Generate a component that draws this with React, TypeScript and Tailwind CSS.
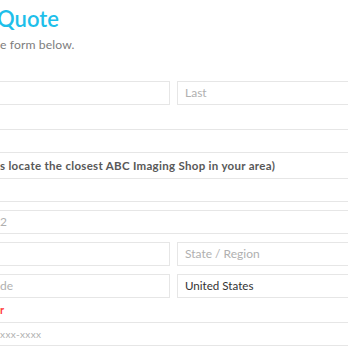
import React from "react";

const font = { fontFamily: "Lato, 'Open Sans', sans-serif" };

function Box({ children, className = "" }: { children?: React.ReactNode; className?: string }) {
  return (
    <div className={"h-[24px] border-[#e6e6e6] bg-white flex items-center " + className}>
      {children}
    </div>
  );
}

export default function App() {
  return (
    <div className="w-[348px] h-[348px] overflow-hidden bg-white relative" style={font}>
      <div className="h-[36px] pt-[5px] text-[22px] leading-[28px] font-semibold text-[#1ebfea] -ml-[3px]">Quote</div>
      <div className="h-[45px] text-[12.2px] leading-[18px] text-[#7d7d7d] tracking-[0.1px]">e form below.</div>
      <div className="flex gap-[7px]">
        <Box className="w-[170px] border-y border-r" />
        <Box className="flex-1 border-y border-l pl-[7px] text-[12px] text-[#b0b0b0]">Last</Box>
      </div>
      <div className="h-[24px]" />
      <Box className="border-y" />
      <div className="h-[25px] flex items-center text-[11.5px] font-bold text-[#585858] tracking-[0.3px]">
        s locate the closest ABC Imaging Shop in your area)
      </div>
      <Box className="border-y" />
      <div className="h-[8px]" />
      <Box className="border-y text-[12px] text-[#b0b0b0]">2</Box>
      <div className="h-[8px]" />
      <div className="flex gap-[7px]">
        <Box className="w-[170px] border-y border-r" />
        <Box className="flex-1 border-y border-l pl-[7px] text-[12px] text-[#b0b0b0]">State / Region</Box>
      </div>
      <div className="h-[8px]" />
      <div className="flex gap-[7px]">
        <Box className="w-[170px] border-y border-r text-[12px] text-[#b0b0b0]">de</Box>
        <Box className="flex-1 border-y border-l pl-[7px] text-[11.6px] text-[#333]">United States</Box>
      </div>
      <div className="h-[24px] flex items-center text-[11px] font-bold text-[#ff3b3b]">r</div>
      <Box className="border-y text-[10px] text-[#b0b0b0] tracking-[0.4px]">xxx-xxxx</Box>
    </div>
  );
}
